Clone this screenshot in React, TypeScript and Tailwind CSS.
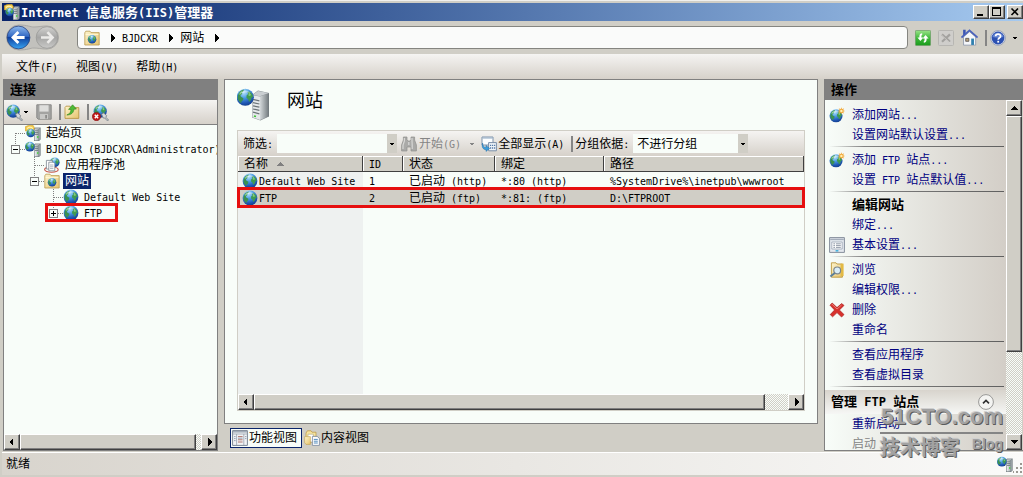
import { useState } from 'react';
import type { ReactNode } from 'react';
import clsx from 'clsx';

/* ---------- text ---------- */

// Latin runs are set in a half-width mono face, next to full-width CJK glyphs
function T({ text, bold }: { text: string; bold?: boolean }) {
  return (
    <span className={clsx('whitespace-pre', bold ? 'text-[13px] font-bold' : 'text-xs')}>
      {text.split(/([\x20-\x7e]+)/).map((part, i) =>
        i % 2 ? (
          <span key={i} className={bold ? 'text-xs leading-none' : 'text-[10px] leading-none'}>
            {part}
          </span>
        ) : (
          part
        ),
      )}
    </span>
  );
}

/* ---------- icons ---------- */

interface IconProps {
  size?: number;
  children?: ReactNode;
}

function Icon({ size = 16, children }: IconProps) {
  return (
    <svg width={size} height={size} viewBox="0 0 16 16" className="shrink-0" aria-hidden="true">
      {children}
    </svg>
  );
}

function IconDefs() {
  return (
    <svg className="absolute h-0 w-0" aria-hidden="true">
      <defs>
        <radialGradient id="sea" cx="0.4" cy="0.2" r="0.85">
          <stop offset="0" stopColor="#c4eafc" />
          <stop offset="0.4" stopColor="#4a9be4" />
          <stop offset="0.75" stopColor="#1f57b4" />
          <stop offset="1" stopColor="#123a86" />
        </radialGradient>
        <linearGradient id="tower" x1="0" x2="1">
          <stop offset="0" stopColor="#f1f4f5" />
          <stop offset="1" stopColor="#a4adb1" />
        </linearGradient>
        <linearGradient id="towerSide" x1="0" x2="1">
          <stop offset="0" stopColor="#d3d8da" />
          <stop offset="1" stopColor="#6f777b" />
        </linearGradient>
        <linearGradient id="folder" x1="0" x2="1" y2="1">
          <stop offset="0" stopColor="#fdf5cd" />
          <stop offset="1" stopColor="#e6c36d" />
        </linearGradient>
        <linearGradient id="navBlue" x2="0" y2="1">
          <stop offset="0" stopColor="#8db9ee" />
          <stop offset="0.45" stopColor="#3369c4" />
          <stop offset="0.5" stopColor="#10419f" />
          <stop offset="1" stopColor="#38a4f2" />
        </linearGradient>
        <linearGradient id="navGray" x2="0" y2="1">
          <stop offset="0" stopColor="#d2d2d0" />
          <stop offset="0.5" stopColor="#a5a5a4" />
          <stop offset="1" stopColor="#cacac8" />
        </linearGradient>
        <linearGradient id="green" x2="0" y2="1">
          <stop offset="0" stopColor="#9be38a" />
          <stop offset="0.5" stopColor="#3fb93a" />
          <stop offset="1" stopColor="#1a9a1c" />
        </linearGradient>
      </defs>
    </svg>
  );
}

function GlobeShape() {
  return (
    <>
      <circle cx="8" cy="8" r="7.4" fill="url(#sea)" />
      <path d="M1.6 6.4C2.4 3.8 4.2 2 6.8 1.4L6.2 3 5 3.8 5.4 5 3.8 6.2 4.2 7.6 6.4 8.8 6 10.6 4.8 11.4 4.4 13.2C2.6 11.8 1.4 9.8 1.4 8Z" fill="#3b9150" />
      <path d="M9.8 3.4L11.6 3C13.4 4.2 14.6 6 14.7 8L13.4 8.2 12.8 10.6 11.2 12 10.6 9.6 9 8.4 9.2 6.2 10.6 5.2Z" fill="#3f9a52" />
      <path d="M2.6 5.4C3.4 3.8 4.8 2.6 6.2 2.2L5 3.6 4.8 4.8 3.4 5.8Z" fill="#8bd08b" />
      <path d="M11 3.8L12.8 5.4 12.4 7 10.8 6.6Z" fill="#86cc7c" />
      <path d="M3.4 4.6C5.6 1.6 10.4 1.6 12.6 4.4C9.6 3.6 6.4 3.6 3.4 4.6Z" fill="#fff" opacity="0.35" />
    </>
  );
}

function ServerShape() {
  return (
    <>
      <path d="M9 3.6L10.4 2.4H15.6V14.6L14 16H9Z" fill="#70797d" />
      <path d="M9.6 4.2H13.6V15.4H9.6Z" fill="url(#tower)" />
      <path d="M9.8 3.6L10.8 2.8H15L14 3.6Z" fill="#e8ecee" />
      <path d="M14 4.2L15.2 3.2V14.2L14 15.2Z" fill="#98a1a5" />
      <path d="M10 5.8H13.2M10 7.6H13.2M10 9.4H13.2" stroke="#5f6a70" strokeWidth="0.8" />
      <rect x="12" y="11.2" width="1.4" height="1.6" fill="#49d63c" />
    </>
  );
}

const Globe = ({ size }: IconProps) => (
  <Icon size={size}>
    <GlobeShape />
  </Icon>
);

const GlobeServer = () => (
  <Icon>
    <ServerShape />
    <g transform="translate(-0.4 0.4) scale(0.66)">
      <GlobeShape />
    </g>
  </Icon>
);

const StartPage = () => (
  <Icon>
    <ServerShape />
    <path d="M0.2 1.8L3 0.6 8 0.2 9.4 2.6 8.4 6 0.4 6Z" fill="#f4cb4a" stroke="#c3921f" strokeWidth="0.5" />
    <g transform="translate(1 3.4) scale(0.58)">
      <GlobeShape />
    </g>
    <path d="M2 3.6C3.6 1.8 6 1.6 8 3.6" fill="none" stroke="#fff3b4" strokeWidth="1.2" />
  </Icon>
);

const FolderShape = () => (
  <path d="M1 3.4L2 2.2H6L7 3.6H14.8V14.4H1Z" fill="url(#folder)" stroke="#b48f3a" strokeWidth="0.8" />
);

const SiteFolder = () => (
  <Icon>
    <path d="M0.8 2.8L1.8 1.2H6L7 2.6H15.2V15H0.8Z" fill="url(#folder)" stroke="#b99a50" strokeWidth="0.8" />
    <path d="M1.6 4.4H14.4" stroke="#fffae0" strokeWidth="0.8" />
    <g transform="translate(3.4 4.6) scale(0.58)">
      <GlobeShape />
    </g>
  </Icon>
);

const AppPool = () => (
  <Icon>
    <g transform="translate(5.4 0) scale(0.66)">
      <GlobeShape />
    </g>
    <ellipse cx="7.4" cy="12.6" rx="6.8" ry="2.6" fill="none" stroke="#c9574b" strokeWidth="1.1" />
    <path d="M2.4 3.4H8.4V12H2.4Z" fill="#fff" stroke="#7b8590" strokeWidth="0.8" />
    <path d="M4.8 5.2H9.4L10.8 6.6V13.8H4.8Z" fill="#fff" stroke="#7b8590" strokeWidth="0.8" />
    <path d="M6 8H9.4M6 9.8H9.4M6 11.6H9.4" stroke="#8d97a1" strokeWidth="0.7" />
  </Icon>
);

const PlugShape = () => (
  <path d="M9 9.6L11 8.4 13.8 11 13 12.4 15.6 15.2 14.4 15.8 12 13.2 10.6 13.2Z" fill="#d5d9dc" stroke="#737c84" strokeWidth="0.8" />
);

const Connect = () => (
  <Icon size={17}>
    <g transform="scale(0.84)">
      <GlobeShape />
    </g>
    <PlugShape />
  </Icon>
);

const Disconnect = () => (
  <Icon size={17}>
    <g transform="translate(1 0) scale(0.84)">
      <GlobeShape />
    </g>
    <PlugShape />
    <circle cx="4.2" cy="11.8" r="3.9" fill="#c01818" stroke="#7f0e0e" strokeWidth="0.5" />
    <path d="M2.6 10.2L5.8 13.4M5.8 10.2L2.6 13.4" stroke="#fff" strokeWidth="1.4" />
  </Icon>
);

const Save = () => (
  <Icon>
    <path d="M0.8 0.8H15.2V15.2H2.2L0.8 13.8Z" fill="#a3a3a1" stroke="#8b8b89" />
    <path d="M3.4 1.2H12.6V7.6H3.4Z" fill="#dededc" />
    <path d="M4 10H12V15H4Z" fill="#c8c8c6" />
    <path d="M9.2 11H11V14.4H9.2Z" fill="#8b8b89" />
  </Icon>
);

const UpFolder = () => (
  <Icon>
    <FolderShape />
    <path d="M2.8 11C5.8 10 7 7.8 7 5.4H4.6L8.6 0.8 12.4 5 9.8 5.2C9.8 8.6 7.2 11 2.8 11Z" fill="#4dbb37" stroke="#2b7f1d" strokeWidth="0.6" />
  </Icon>
);

const NewSite = () => (
  <Icon>
    <g transform="translate(0 1.8) scale(0.88)">
      <GlobeShape />
    </g>
    <path d="M12.4 0.2L13 2.2 15 1.2 14.2 3.2 16 4 14.2 4.8 15 6.6 13 5.8 12.4 7.6 11.6 5.8 9.8 6.6 10.6 4.8 8.8 4 10.6 3.2 9.8 1.2 11.6 2.2Z" fill="#f2a632" />
    <circle cx="12.4" cy="4" r="1.2" fill="#fff0b5" />
  </Icon>
);

const SettingsForm = () => (
  <Icon>
    <path d="M0.6 0.6H15.4V15.4H0.6Z" fill="#e3e8ee" stroke="#868f9c" />
    <path d="M1.2 2.4H14.8" stroke="#a5aebb" strokeWidth="1.4" />
    <path d="M2.8 5H13.2V12H2.8Z" fill="#fbfcfd" stroke="#9ca6b4" strokeWidth="0.8" />
    <path d="M4.4 6.8H6M7 6.8H11.8M4.4 8.6H6M7 8.6H11.8M4.4 10.4H6M7 10.4H11.8" stroke="#788394" strokeWidth="0.8" />
    <path d="M6.6 13.8H9.4" stroke="#4ab2dd" strokeWidth="1.6" />
  </Icon>
);

const Browse = () => (
  <Icon>
    <path d="M2.4 0.8H7L8 2H13.4V15.2H2.4Z" fill="url(#folder)" stroke="#b58d2c" strokeWidth="0.8" />
    <path d="M11.6 1.6H14.6V14H11.6Z" fill="#e3ba44" />
    <circle cx="8.2" cy="8.4" r="3.4" fill="#d9edf7" stroke="#7a858c" strokeWidth="1.2" />
    <path d="M5.8 11L1.4 14.6" stroke="#5c7f9a" strokeWidth="2" />
  </Icon>
);

const Delete = () => (
  <Icon>
    <path d="M1 3.2L3.2 1 8 5.6 12.6 1.6 15 3.4 10.4 8 15 12.6 12.6 15 8 10.6 3.6 14.8 1.2 12.6 5.6 8Z" fill="#d8312c" stroke="#a61f1f" strokeWidth="0.7" />
    <path d="M2.4 3.2L3.2 2.4 8 7 12.6 3" fill="none" stroke="#f19087" strokeWidth="0.8" />
  </Icon>
);

const Binoculars = () => (
  <Icon>
    <path d="M2.4 1H6V4L7 5H9L10 4V1H13.6V4L15.4 9V15H10V11H6V15H0.6V9L2.4 4Z" fill="#aaaaa8" stroke="#8f8f8d" strokeWidth="0.7" />
    <path d="M3.4 2V5L2 9V13M11 2V5L11.2 9V13M7.8 6V9" fill="none" stroke="#d8d8d6" strokeWidth="1.2" />
  </Icon>
);

const ShowAll = () => (
  <Icon>
    <path d="M1 1H12V9H1Z" fill="#fdfeff" stroke="#7f93ab" />
    <path d="M1.4 2H11.6" stroke="#9eb4ca" strokeWidth="1.2" />
    <path d="M7.6 6.6H15.4V14.8H7.6Z" fill="#eef3f8" stroke="#7b8fa8" />
    <path d="M9 9.4H14.4M9 12H14.4" stroke="#5479a6" strokeWidth="1.4" strokeDasharray="1.2 0.8" />
    <path d="M1.6 7C1.6 10 3 11.4 5 11.4V9.4L8.6 12.4 5 15.4V13.6C2 13.6 0.4 11 1.6 7Z" fill="#3e9edb" stroke="#1f6ba5" strokeWidth="0.5" />
  </Icon>
);

const FeatureView = () => (
  <Icon>
    <path d="M0.6 0.6H15.4V15.4H0.6Z" fill="#f2f4f6" stroke="#7d8794" />
    <path d="M1 1.8H15" stroke="#a3adb9" strokeWidth="1.6" />
    <path d="M1 4H15M4.6 4V15M11.8 4V15" stroke="#98a2ae" strokeWidth="0.8" />
    <path d="M6 6.6H10.6M6 9.8H10.6M6 12H10.6" stroke="#a8685e" strokeWidth="0.9" />
    <path d="M6 8.2H10.6M2 6.6H3.6M2 8.6H3.6M2 10.6H3.6M13 6.6H14.4M13 8.6H14.4" stroke="#8290a5" strokeWidth="0.8" />
  </Icon>
);

const ContentView = () => (
  <Icon>
    <path d="M2 3L3.4 0.8H7L8 2.2H12V12H2Z" fill="#f6e39d" stroke="#b8943f" strokeWidth="0.7" />
    <path d="M4 4.2H9.4V12H4Z" fill="#fff" stroke="#a9a283" strokeWidth="0.6" />
    <path d="M0.6 6.6H6.4V14.4H2L0.6 12.6Z" fill="url(#folder)" stroke="#b8943f" strokeWidth="0.5" />
    <path d="M8.4 6.4H13.2L15.4 8.4V15.4H8.4Z" fill="#fff" stroke="#76859c" strokeWidth="0.8" />
    <path d="M9.8 9.4H13.8M9.8 11.2H13.8M9.8 13H13.8" stroke="#3f7fb5" strokeWidth="0.9" />
  </Icon>
);

const Refresh = () => (
  <Icon>
    <rect x="0.4" y="0.4" width="15.2" height="15.2" rx="1" fill="url(#green)" stroke="#6f9d68" strokeWidth="0.8" />
    <path d="M7.2 3.2C5.4 3.2 4.4 4.4 4.4 6.4V7.6H2.4L5.4 11 8.4 7.6H6.4V6.2C6.4 5.4 6.8 5 7.2 5Z" fill="#fff" />
    <path d="M8.8 12.8C10.6 12.8 11.6 11.6 11.6 9.6V8.4H13.6L10.6 5 7.6 8.4H9.6V9.8C9.6 10.6 9.2 11 8.8 11Z" fill="#fff" />
  </Icon>
);

const Stop = () => (
  <Icon>
    <rect x="0.5" y="0.5" width="15" height="15" rx="1" fill="#cfcecb" stroke="#b7b6b2" />
    <path d="M4 4.4L12 11.8M12 4.4L4 11.8" stroke="#a3a29f" strokeWidth="2.2" />
    <path d="M4 5.4L12 12.8" stroke="#dddcd9" strokeWidth="0.6" />
  </Icon>
);

const Home = () => (
  <Icon size={17}>
    <path d="M2.4 7.4L8 2.6 13.8 7.4V15.2H2.4Z" fill="#f5f7fa" stroke="#8c97aa" strokeWidth="0.8" />
    <path d="M2 0.8H4.4V5L2 7Z" fill="#3b55b4" />
    <path d="M0.4 8L8 1.2 15.6 8" fill="none" stroke="#4a62bc" strokeWidth="1.6" />
    <path d="M9.6 9H12.2V15H9.6Z" fill="#2f7fae" />
    <path d="M4.4 8.8H7.4V11.6H4.4Z" fill="#b8a07a" stroke="#4c4a4a" strokeWidth="0.7" />
  </Icon>
);

const Help = () => (
  <Icon>
    <circle cx="8" cy="8" r="7.4" fill="#dfe4ee" stroke="#8d97ad" strokeWidth="0.8" />
    <circle cx="8" cy="8" r="6.4" fill="#2c51b2" />
    <path d="M2.4 7A5.8 5.8 0 0 1 13.6 7C10 8 6 8 2.4 7Z" fill="#7d9be0" opacity="0.7" />
    <path d="M5.6 6.2C5.6 3.4 10.6 3.4 10.6 6.2C10.6 7.8 8.2 7.8 8.2 9.8" fill="none" stroke="#fff" strokeWidth="1.7" />
    <rect x="7.3" y="10.8" width="1.8" height="1.8" fill="#fff" />
  </Icon>
);

const BigSite = () => (
  <svg width="34" height="36" viewBox="0 0 34 36" className="shrink-0" aria-hidden="true">
    <path d="M15 8L21 3.6 32 6V29.4L23.4 33.6 15 30.6Z" fill="#868d91" />
    <path d="M15.4 8.2L23 9.6V33L15.4 30.2Z" fill="#e4e8ea" />
    <path d="M23 9.4L32 6.2V29.2L23 33Z" fill="url(#towerSide)" />
    <path d="M15.4 8L21 4 31.6 6 23 9.2Z" fill="#c9ced1" />
    <path d="M16 12.4L22.4 13.8M16 15.6L22.4 17M16 18.8L22.4 20.2M16 22L22.4 23.4M16 25.2L22.4 26.8" stroke="#6c7478" strokeWidth="1.2" />
    <path d="M17 29L19 29.6" stroke="#38c32f" strokeWidth="1.6" />
    <g transform="translate(-1 1) scale(1.16)">
      <GlobeShape />
    </g>
  </svg>
);

const NavCircles = () => (
  <svg width="54" height="27" viewBox="0 0 54 27" className="absolute inset-0" aria-hidden="true">
    <path d="M13 1C22 1 24 3 28 3S36 2 41 2A11.5 11.5 0 0 1 41 25C35 25 32 24 28 24S22 26 13 26A12.5 12.5 0 0 1 13 1Z" fill="#c2c1bd" stroke="#aaa9a6" />
    <circle cx="12.5" cy="13.5" r="11.4" fill="url(#navBlue)" stroke="#28437e" strokeWidth="0.8" />
    <path d="M12.4 8L7 13.5 12.4 19M7.6 13.5H18.6" fill="none" stroke="#fff" strokeWidth="2.8" />
    <circle cx="41" cy="13.5" r="10.8" fill="url(#navGray)" stroke="#999997" strokeWidth="0.8" />
    <path d="M41.4 8.2L46.6 13.5 41.4 18.8M46 13.5H35" fill="none" stroke="#ecebe9" strokeWidth="2.6" />
  </svg>
);

const arrowPaths = {
  left: 'M5 0V8L1 4Z',
  right: 'M3 0V8L7 4Z',
  up: 'M0 6H8L4 2Z',
  down: 'M0 2H8L4 6Z',
};

function Arrow({ dir, size = 8, color = '#000' }: { dir: keyof typeof arrowPaths; size?: number; color?: string }) {
  return (
    <svg width={size} height={size} viewBox="0 0 8 8" className="shrink-0" shapeRendering="crispEdges" aria-hidden="true">
      <path d={arrowPaths[dir]} fill={color} />
    </svg>
  );
}

/* ---------- shared pieces ---------- */

const raised =
  'border border-t-white border-l-white border-r-[#404040] border-b-[#404040] bg-[#d0cec6] shadow-[inset_-1px_-1px_0_#808080]';
const track = 'bg-[repeating-conic-gradient(#d0cec6_0_25%,#f8fdf9_0_50%)] bg-[length:2px_2px]';
const silver = 'bg-linear-to-b from-[#f5f4f2] to-[#d6d1ca]';

function HScroll({ thumb }: { thumb: string }) {
  return (
    <div className={clsx('flex h-4 shrink-0', track)}>
      <button aria-label="向左滚动" className={clsx('flex w-4 items-center justify-center', raised)}>
        <Arrow dir="left" />
      </button>
      <div className={clsx(raised, thumb)} />
      <div className="flex-1" />
      <button aria-label="向右滚动" className={clsx('flex w-4 items-center justify-center', raised)}>
        <Arrow dir="right" />
      </button>
    </div>
  );
}

const Divider = () => <span className="h-4 w-0.5 shrink-0 bg-[#858585]" />;

/* ---------- top bars ---------- */

function TitleBar() {
  return (
    <header className="ml-0.5 flex h-[18px] shrink-0 items-center bg-linear-to-r from-[#0a246a] to-[#a6caf0] pl-0.5 text-white">
      <StartPage />
      <h1 className="flex-1 pl-px leading-none">
        <T text="Internet 信息服务(IIS)管理器" bold />
      </h1>
      <div className="flex text-black">
        <button aria-label="最小化" className={clsx('flex h-3.5 w-4 justify-center', raised)}>
          <svg width="12" height="12" viewBox="0 0 12 12" shapeRendering="crispEdges">
            <path d="M2 8H8V10H2Z" />
          </svg>
        </button>
        <button aria-label="最大化" className={clsx('flex h-3.5 w-4 justify-center', raised)}>
          <svg width="12" height="12" viewBox="0 0 12 12" shapeRendering="crispEdges">
            <path d="M1 1H10V10H1ZM2 3V9H9V3Z" fillRule="evenodd" />
          </svg>
        </button>
        <button aria-label="关闭" className={clsx('ml-0.5 flex h-3.5 w-4 justify-center', raised)}>
          <svg width="12" height="12" viewBox="0 0 12 12">
            <path d="M2.5 2.5L9 9M9 2.5L2.5 9" stroke="#000" strokeWidth="1.6" />
          </svg>
        </button>
      </div>
    </header>
  );
}

function AddressBar() {
  return (
    <nav className="flex h-[33px] shrink-0 items-center pr-[5px] pl-1.5">
      <div className="relative mr-[17px] flex h-[27px] w-[54px] shrink-0">
        <NavCircles />
        <button aria-label="后退" className="relative flex-1" />
        <button aria-label="前进" className="relative flex-1" disabled />
      </div>
      <div className="flex h-[23px] flex-1 items-center rounded-sm border border-[#858580] bg-[#fafbfa] pl-1.5">
        <SiteFolder />
        <span className="w-2" />
        <Arrow dir="right" />
        <a href="#server" className="pr-2 pl-1.5"><T text="BJDCXR" /></a>
        <Arrow dir="right" />
        <a href="#sites" className="pr-2 pl-1.5"><T text="网站" /></a>
        <Arrow dir="right" />
      </div>
      <div className="flex items-center gap-[7px] pl-[7px]">
        <button aria-label="刷新"><Refresh /></button>
        <button aria-label="停止" disabled><Stop /></button>
        <button aria-label="主页"><Home /></button>
        <div className="flex items-center gap-[3px]">
          <Divider />
          <button aria-label="帮助" className="flex items-center gap-1.5">
            <Help />
            <Arrow dir="down" size={6} />
          </button>
        </div>
      </div>
    </nav>
  );
}

function MenuBar() {
  return (
    <div className={clsx('ml-0.5 flex h-[25px] shrink-0 items-center gap-[18px] pl-3.5', silver)}>
      {['文件(F)', '视图(V)', '帮助(H)'].map((label) => (
        <button key={label}><T text={label} /></button>
      ))}
    </div>
  );
}

/* ---------- connections ---------- */

type Joint = 'none' | 'first' | 'tee' | 'minus' | 'plus';

function TreeCell({ joint }: { joint: Joint }) {
  const box = joint === 'minus' || joint === 'plus';
  return (
    <svg width="19" height="16" viewBox="0 0 19 16" className="shrink-0" shapeRendering="crispEdges" aria-hidden="true">
      {joint !== 'none' && (
        <path
          d={joint === 'first' ? 'M9.5 8V16M10 8.5H19' : joint === 'tee' ? 'M9.5 0V16M10 8.5H19' : 'M9.5 0V8M10 8.5H19'}
          stroke="#808080"
          strokeDasharray="1 1"
        />
      )}
      {box && <path d="M5.5 4.5H13.5V12.5H5.5Z" fill="#f8fdf9" stroke="#808080" />}
      {box && <path d={joint === 'plus' ? 'M7 8.5H12M9.5 6V11' : 'M7 8.5H12'} stroke="#000" />}
    </svg>
  );
}

interface TreeNode {
  label: string;
  icon: ReactNode;
  joints: Joint[];
  marked?: boolean;
}

const tree: TreeNode[] = [
  { label: '起始页', icon: <StartPage />, joints: ['first'] },
  { label: 'BJDCXR (BJDCXR\\Administrator)', icon: <GlobeServer />, joints: ['minus'] },
  { label: '应用程序池', icon: <AppPool />, joints: ['none', 'tee'] },
  { label: '网站', icon: <SiteFolder />, joints: ['none', 'minus'] },
  { label: 'Default Web Site', icon: <Globe />, joints: ['none', 'none', 'tee'] },
  { label: 'FTP', icon: <Globe />, joints: ['none', 'none', 'plus'], marked: true },
];

function Connections() {
  const [selected, setSelected] = useState('网站');

  return (
    <aside className="flex w-[215px] shrink-0 flex-col border border-t-0 border-[#808080] bg-[#f8fdf9]">
      <h2 className="flex h-[21px] shrink-0 items-center bg-[#808080] pl-1.5">
        <T text="连接" bold />
      </h2>
      <div className={clsx('flex h-[25px] shrink-0 items-center border-b border-[#808080] pl-0.5', silver)}>
        <button aria-label="创建新连接" className="flex items-center pr-[7px]">
          <Connect />
          <Arrow dir="down" size={6} />
        </button>
        <button aria-label="保存连接" disabled className="pr-[7px]"><Save /></button>
        <Divider />
        <button aria-label="向上" className="pr-[7px] pl-[3px]"><UpFolder /></button>
        <Divider />
        <button aria-label="删除连接" className="pl-[3px]"><Disconnect /></button>
      </div>
      <ul className="min-h-0 flex-1 overflow-hidden pl-0.5">
        {tree.map((node) => (
          <li key={node.label} className="relative flex h-4 items-center">
            {node.joints.map((joint, i) => (
              <TreeCell key={i} joint={joint} />
            ))}
            {node.icon}
            <button
              onClick={() => setSelected(node.label)}
              className={clsx(
                'ml-[3px] flex h-4 items-center px-0.5 leading-none',
                selected === node.label && 'bg-[#0a246a] text-white',
              )}
            >
              <T text={node.label} />
            </button>
            {node.marked && (
              <span className="pointer-events-none absolute -top-0.5 left-[39px] h-[19px] w-[73px] border-3 border-[#e60f0f]" />
            )}
          </li>
        ))}
      </ul>
      <HScroll thumb="w-[176px]" />
    </aside>
  );
}

/* ---------- sites ---------- */

const columns = [
  { title: '名称', width: 'w-[125px]' },
  { title: 'ID', width: 'w-10' },
  { title: '状态', width: 'w-[92px]' },
  { title: '绑定', width: 'w-[109px]' },
  { title: '路径', width: '' },
];

const sites = [
  { name: 'Default Web Site', id: '1', state: '已启动 (http)', binding: '*:80 (http)', path: '%SystemDrive%\\inetpub\\wwwroot' },
  { name: 'FTP', id: '2', state: '已启动 (ftp)', binding: '*:81: (ftp)', path: 'D:\\FTPROOT', selected: true },
];

function FilterBar() {
  return (
    <div className={clsx('flex h-[25px] shrink-0 items-center pl-[5px]', silver)}>
      <label htmlFor="filter"><T text="筛选:" /></label>
      <input id="filter" className="ml-1 h-[19px] w-[110px] bg-[#f8fdf9] text-xs outline-none" />
      <button aria-label="筛选历史" className="mr-1 flex h-[19px] w-2.5 items-center justify-center bg-[#d0cec6]">
        <Arrow dir="down" size={6} />
      </button>
      <button disabled className="flex items-center text-[#858585]">
        <Binoculars />
        <span className="w-0.5" />
        <T text="开始(G)" />
        <span className="w-2" />
        <Arrow dir="down" size={6} color="#858585" />
        <span className="w-1.5" />
      </button>
      <button className="flex items-center gap-px">
        <ShowAll />
        <T text="全部显示(A)" />
      </button>
      <span className="w-[7px]" />
      <Divider />
      <label htmlFor="group" className="ml-0.5"><T text="分组依据:" /></label>
      <div className="relative ml-1 h-[19px] w-[115px] bg-[#f8fdf9]">
        <select id="group" className="h-full w-full appearance-none pl-1 text-xs leading-none outline-none">
          <option>不进行分组</option>
          <option>状态</option>
        </select>
        <span className="pointer-events-none absolute inset-y-0 right-0 flex w-2.5 items-center justify-center bg-[#d0cec6]">
          <Arrow dir="down" size={6} />
        </span>
      </div>
    </div>
  );
}

function SiteTable() {
  return (
    <div className="min-h-0 flex-1 bg-[linear-gradient(90deg,#eef1f0_125px,#f8fdf9_125px)]">
      <table className="w-full table-fixed border-collapse text-left leading-none">
        <thead>
          <tr className="h-4 bg-[#d0cec6]">
            {columns.map((col, i) => (
              <th
                key={col.title}
                className={clsx(
                  'h-4 py-0 pl-1.5 font-normal shadow-[inset_-1px_-1px_0_#404040,inset_1px_1px_0_#fff]',
                  col.width,
                )}
              >
                <span className="flex items-center gap-2">
                  <T text={col.title} />
                  {i === 0 && <Arrow dir="up" color="#808080" />}
                </span>
              </th>
            ))}
          </tr>
        </thead>
        <tbody>
          {sites.map((site) => (
            <tr key={site.name} className={clsx('relative h-[17px]', site.selected && 'bg-[#d0cec6]')}>
              <td className="p-0 pl-1">
                <span className="flex h-[17px] items-center gap-px">
                  <Globe />
                  <T text={site.name} />
                </span>
                {site.selected && (
                  <span className="pointer-events-none absolute -inset-x-px -top-0.5 -bottom-0.5 border-3 border-[#e60f0f]" />
                )}
              </td>
              <td className="p-0 pl-1.5"><T text={site.id} /></td>
              <td className="p-0 pl-1.5"><T text={site.state} /></td>
              <td className="p-0 pl-1.5"><T text={site.binding} /></td>
              <td className="p-0 pl-1.5"><T text={site.path} /></td>
            </tr>
          ))}
        </tbody>
      </table>
    </div>
  );
}

function Sites() {
  return (
    <main className="mx-1.5 flex min-w-0 flex-1 flex-col">
      <section className="flex min-h-0 flex-1 flex-col border border-[#808080] bg-[#f8fdf9] px-3 pb-3">
        <div className="flex h-[50px] shrink-0 items-center gap-4">
          <BigSite />
          <h2 className="pb-2 text-lg leading-none">网站</h2>
        </div>
        <div className="flex min-h-0 flex-1 flex-col border border-[#d0cec6]">
          <FilterBar />
          <SiteTable />
          <HScroll thumb="w-[511px]" />
        </div>
      </section>
      <div className="flex h-[27px] shrink-0 items-center gap-0.5 pl-1.5">
        <button className="flex h-5 items-center gap-px border border-[#0a246a] bg-[#f8fdf9] pr-1 pl-px">
          <FeatureView />
          <T text="功能视图" />
        </button>
        <button className="flex h-5 items-center gap-px">
          <ContentView />
          <T text="内容视图" />
        </button>
      </div>
    </main>
  );
}

/* ---------- actions ---------- */

interface Action {
  label: string;
  icon?: ReactNode;
  heading?: boolean;
}

const actionGroups: Action[][] = [
  [{ label: '添加网站...', icon: <NewSite /> }, { label: '设置网站默认设置...' }],
  [{ label: '添加 FTP 站点...', icon: <NewSite /> }, { label: '设置 FTP 站点默认值...' }],
  [
    { label: '编辑网站', heading: true },
    { label: '绑定...' },
    { label: '基本设置...', icon: <SettingsForm /> },
  ],
  [
    { label: '浏览', icon: <Browse /> },
    { label: '编辑权限...' },
    { label: '删除', icon: <Delete /> },
    { label: '重命名' },
  ],
  [{ label: '查看应用程序' }, { label: '查看虚拟目录' }],
];

function ActionRow({ action }: { action: Action }) {
  return (
    <li className="flex h-5 items-center gap-[7px] pl-1">
      <span className="w-4 shrink-0">{action.icon}</span>
      {action.heading ? (
        <h3><T text={action.label} bold /></h3>
      ) : (
        <a href="#action" className="text-[#00007f]"><T text={action.label} /></a>
      )}
    </li>
  );
}

function Actions() {
  return (
    <aside className="relative flex w-[199px] shrink-0 flex-col border-b border-l border-[#808080]">
      <h2 className="flex h-[21px] shrink-0 items-center bg-[#808080] pl-1.5">
        <T text="操作" bold />
      </h2>
      <div className="flex min-h-0 flex-1">
        <div className="min-w-0 flex-1 overflow-hidden bg-linear-to-r from-[#f8fdf9] to-[#d3cec7] pt-[5px]">
          {actionGroups.map((group, i) => (
            <ul key={i}>
              {group.map((action) => (
                <ActionRow key={action.label} action={action} />
              ))}
              <li className="mr-0.5 ml-1 flex h-[5px]">
                <span className="mt-px h-px w-full bg-linear-to-r from-transparent via-[#808080] via-20% to-[#606060]" />
              </li>
            </ul>
          ))}
          <div className="flex h-6 items-center justify-between bg-linear-to-b from-[#d8d4cd] to-[#f6f7f5] pr-3 pl-1.5">
            <h3><T text="管理 FTP 站点" bold /></h3>
            <button aria-label="折叠">
              <Icon>
                <circle cx="8" cy="8" r="7.4" fill="#f4f4f2" stroke="#8f8f8d" strokeWidth="0.9" />
                <path d="M5 9.4L8 6.4 11 9.4" fill="none" stroke="#303030" strokeWidth="1.6" />
              </Icon>
            </button>
          </div>
          <div className="flex h-5 items-center pl-[27px] text-[#00007f]"><T text="重新启动" /></div>
          <div className="flex h-5 items-center pl-[27px] text-[#858585]"><T text="启动" /></div>
        </div>
        <div className={clsx('mr-px flex w-4 shrink-0 flex-col', track)}>
          <button aria-label="向上滚动" className={clsx('flex h-4 shrink-0 items-center justify-center', raised)}>
            <Arrow dir="up" />
          </button>
          <div className={clsx('h-[236px]', raised)} />
          <div className="flex-1" />
          <button aria-label="向下滚动" className={clsx('flex h-4 shrink-0 items-center justify-center', raised)}>
            <Arrow dir="down" />
          </button>
        </div>
      </div>
      {/* site watermark, laid over the panel's lower corner */}
      <div className="pointer-events-none absolute right-5 -bottom-3 w-[123px] font-['Liberation_Sans','Noto_Sans_CJK_SC',sans-serif] font-bold text-[#a2a2a2] text-shadow-[1px_1px_0_#5c5c5c,-1px_-1px_0_#d0d0d0]">
        <div className="flex h-[30px] items-center justify-end text-[22px] leading-none">51CTO.com</div>
        <div className="h-0.5 bg-[#858585]" />
        <div className="flex h-7 items-center justify-between">
          <span className="text-xl leading-none">技术博客</span>
          <span className="pb-2 text-sm leading-none">Blog</span>
        </div>
      </div>
    </aside>
  );
}

export default function App() {
  return (
    <div className="flex h-screen flex-col overflow-hidden border-t border-[#f0f0ee] bg-[#d0cec6] pt-0.5 pb-0.5 font-['DejaVu_Sans_Mono','Noto_Sans_CJK_SC',sans-serif] text-xs text-black">
      <IconDefs />
      <TitleBar />
      <AddressBar />
      <MenuBar />
      <div className="flex min-h-0 flex-1 pb-px pl-[3px]">
        <Connections />
        <Sites />
        <Actions />
      </div>
      <footer className="ml-0.5 flex h-[23px] shrink-0 items-center border-t border-white bg-linear-to-r from-[#d8d4cd] to-[#fafaf9] pl-1">
        <span className="flex-1"><T text="就绪" /></span>
        <GlobeServer />
        <svg width="10" height="10" viewBox="0 0 10 10" className="mt-2" shapeRendering="crispEdges" aria-hidden="true">
          <path d="M7 0H9V2H7ZM3 4H5V6H3ZM7 4H9V6H7ZM0 8H1V10H0ZM3 8H5V10H3ZM7 8H9V10H7Z" fill="#9a9892" />
        </svg>
      </footer>
    </div>
  );
}
